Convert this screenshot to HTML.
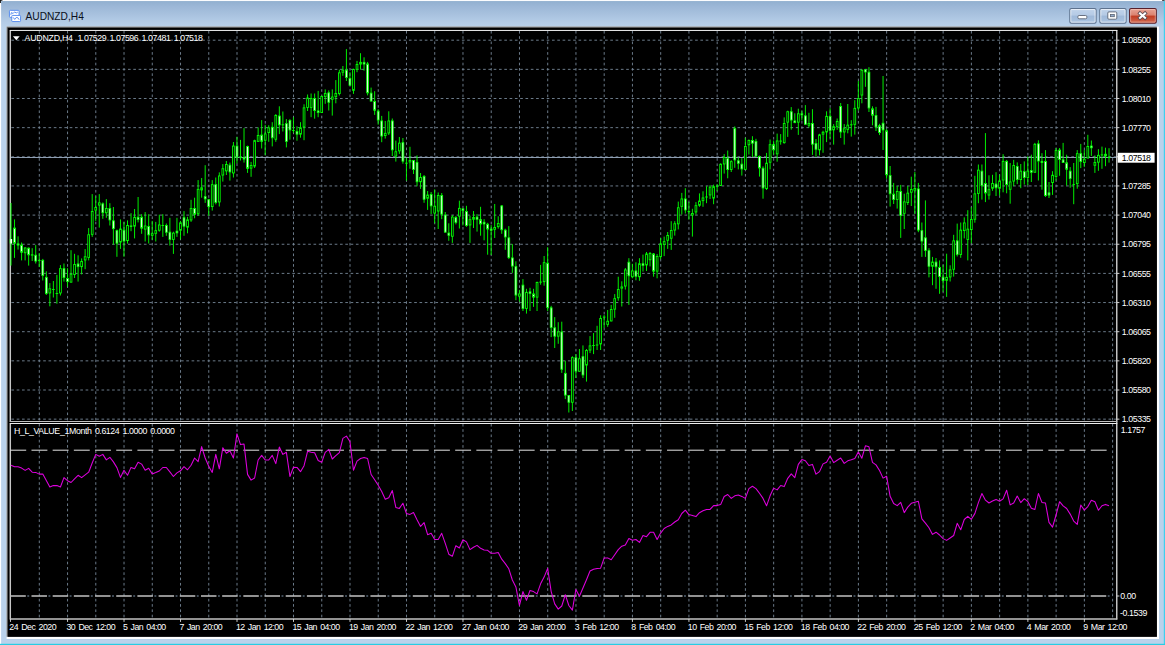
<!DOCTYPE html>
<html><head><meta charset="utf-8"><title>AUDNZD,H4</title>
<style>
html,body{margin:0;padding:0;}
body{width:1165px;height:645px;overflow:hidden;position:relative;background:#bad2eb;font-family:"Liberation Sans",sans-serif;}
.abs{position:absolute;}
#frame,#chart{left:0;top:0;}
.t{position:absolute;color:#fff;font-size:8.8px;line-height:10px;letter-spacing:-0.43px;word-spacing:1.3px;white-space:nowrap;}
.t .L{letter-spacing:-0.25px;}
.tm{letter-spacing:-0.53px !important;}
.pl{left:1121.8px;}
#title{position:absolute;left:25.5px;top:10.1px;font-size:10.2px;line-height:14px;color:#0a1020;white-space:nowrap;}
</style></head><body>

<svg id="frame" class="abs" width="1165" height="645" viewBox="0 0 1165 645">
<defs><linearGradient id="tg" x1="0" y1="0" x2="0" y2="1"><stop offset="0" stop-color="#91afcf"/><stop offset="0.2" stop-color="#9cb7d7"/><stop offset="0.45" stop-color="#a6c0dd"/><stop offset="0.75" stop-color="#b3cbe6"/><stop offset="1" stop-color="#bad2eb"/></linearGradient>
<linearGradient id="bg" x1="0" y1="0" x2="0" y2="1"><stop offset="0" stop-color="#c1d4eb"/><stop offset="0.46" stop-color="#b5cae5"/><stop offset="0.5" stop-color="#9fb9d9"/><stop offset="1" stop-color="#abc4e1"/></linearGradient>
<linearGradient id="rg" x1="0" y1="0" x2="0" y2="1"><stop offset="0" stop-color="#e8a496"/><stop offset="0.46" stop-color="#db826f"/><stop offset="0.5" stop-color="#c03a20"/><stop offset="1" stop-color="#d26c53"/></linearGradient></defs>
<rect x="0" y="0" width="1165" height="645" fill="#bad2eb"/>
<rect x="0" y="1" width="1165" height="27" fill="url(#tg)"/>
<rect x="0" y="0" width="1165" height="1.05" fill="#fbfcfe"/>
<rect x="0" y="0" width="1.1" height="645" fill="#fdfeff"/>
<rect x="1163.8" y="0" width="1.2" height="645" fill="#3ecfee"/>
<rect x="0" y="643.8" width="1165" height="1.2" fill="#27cde3"/>
<path d="M0 0h2.4v0.8h-1.5v2.2h-0.9z" fill="#111"/>
<path d="M1164.4 0h-2.3v0.75h2.3z" fill="#111"/><path d="M1164.3 0h0.7v1.3h-0.7z" fill="#888"/>
<rect x="6.6" y="26.6" width="1152.4" height="612.4" fill="#fff"/>
<rect x="6.6" y="26.6" width="1150.3" height="610.2" fill="#6e6e6e"/>
<rect x="7.8" y="27.8" width="1149.1" height="609" fill="#000"/>
<rect x="1069.8" y="8.55" width="26.3" height="14.6" rx="1.5" fill="url(#bg)" stroke="#5d728e" stroke-width="1.05"/>
<rect x="1070.8" y="9.55" width="24.3" height="12.6" rx="0.9" fill="none" stroke="rgba(255,255,255,0.7)" stroke-width="0.9"/>
<rect x="1099.8" y="8.55" width="26.3" height="14.6" rx="1.5" fill="url(#bg)" stroke="#5d728e" stroke-width="1.05"/>
<rect x="1100.8" y="9.55" width="24.3" height="12.6" rx="0.9" fill="none" stroke="rgba(255,255,255,0.7)" stroke-width="0.9"/>
<rect x="1129.6" y="8.55" width="26.7" height="14.6" rx="1.5" fill="url(#rg)" stroke="#561f2b" stroke-width="1.05"/>
<rect x="1130.6" y="9.55" width="24.7" height="12.6" rx="0.9" fill="none" stroke="rgba(255,215,205,0.55)" stroke-width="0.9"/>
<rect x="1077.9" y="15.5" width="8.9" height="3.3" rx="1.2" fill="#fff" stroke="#5c6474" stroke-width="0.9"/>
<rect x="1107.8" y="11.9" width="9" height="7.3" rx="1.1" fill="#fff" stroke="#5c6474" stroke-width="0.9"/>
<rect x="1110.4" y="14.4" width="3.9" height="2.3" fill="#96aece" stroke="#5c6474" stroke-width="0.8"/>
<path d="M1140 13.4l5 4.4M1145 13.4l-5 4.4" stroke="#5c4a50" stroke-width="3.7" stroke-linecap="square" fill="none"/>
<path d="M1140 13.4l5 4.4M1145 13.4l-5 4.4" stroke="#fff" stroke-width="2.1" stroke-linecap="square" fill="none"/>
<rect x="9.45" y="10.35" width="9.6" height="7" rx="0.8" fill="#fff" stroke="#4c84ee" stroke-width="0.9"/>
<path d="M10.8 14.8l0.6-2.2 1.7 0.9 1.5-1.6 1.6 1.1 1.6-0.9" stroke="#4c84ee" stroke-width="0.9" fill="none"/>
<rect x="11.75" y="15.45" width="8.8" height="6.1" rx="0.8" fill="#fff" stroke="#4c84ee" stroke-width="0.9"/>
<path d="M13.2 17.4l1.5 2 1.5-1.9 1.6 0.2 1.3 2" stroke="#4c84ee" stroke-width="0.9" fill="none"/>
</svg>
<svg id="chart" class="abs" width="1165" height="645" viewBox="0 0 1165 645">
<path d="M39.3 30.9V421M67.55 30.9V421M95.79 30.9V421M124.03 30.9V421M152.28 30.9V421M180.52 30.9V421M208.77 30.9V421M237.01 30.9V421M265.26 30.9V421M293.5 30.9V421M321.75 30.9V421M350 30.9V421M378.24 30.9V421M406.49 30.9V421M434.73 30.9V421M462.98 30.9V421M491.22 30.9V421M519.47 30.9V421M547.71 30.9V421M575.95 30.9V421M604.2 30.9V421M632.44 30.9V421M660.69 30.9V421M688.93 30.9V421M717.18 30.9V421M745.42 30.9V421M773.67 30.9V421M801.91 30.9V421M830.16 30.9V421M858.4 30.9V421M886.65 30.9V421M914.89 30.9V421M943.14 30.9V421M971.38 30.9V421M999.63 30.9V421M1027.88 30.9V421M1056.12 30.9V421M1084.37 30.9V421M1112.61 30.9V421" stroke="#778899" stroke-width="0.9" stroke-dasharray="2.65 2.65" fill="none"/>
<path d="M39.3 423.9V618.5M67.55 423.9V618.5M95.79 423.9V618.5M124.03 423.9V618.5M152.28 423.9V618.5M180.52 423.9V618.5M208.77 423.9V618.5M237.01 423.9V618.5M265.26 423.9V618.5M293.5 423.9V618.5M321.75 423.9V618.5M350 423.9V618.5M378.24 423.9V618.5M406.49 423.9V618.5M434.73 423.9V618.5M462.98 423.9V618.5M491.22 423.9V618.5M519.47 423.9V618.5M547.71 423.9V618.5M575.95 423.9V618.5M604.2 423.9V618.5M632.44 423.9V618.5M660.69 423.9V618.5M688.93 423.9V618.5M717.18 423.9V618.5M745.42 423.9V618.5M773.67 423.9V618.5M801.91 423.9V618.5M830.16 423.9V618.5M858.4 423.9V618.5M886.65 423.9V618.5M914.89 423.9V618.5M943.14 423.9V618.5M971.38 423.9V618.5M999.63 423.9V618.5M1027.88 423.9V618.5M1056.12 423.9V618.5M1084.37 423.9V618.5M1112.61 423.9V618.5" stroke="#778899" stroke-width="0.9" stroke-dasharray="2.65 2.65" fill="none"/>
<path d="M11.4 40.2H1116.7M11.4 69.35H1116.7M11.4 98.5H1116.7M11.4 127.65H1116.7M11.4 156.8H1116.7M11.4 185.95H1116.7M11.4 215.1H1116.7M11.4 244.25H1116.7M11.4 273.4H1116.7M11.4 302.55H1116.7M11.4 331.7H1116.7M11.4 360.85H1116.7M11.4 390H1116.7M11.4 419.15H1116.7" stroke="#778899" stroke-width="0.9" stroke-dasharray="2.65 2.65" fill="none"/>
<path d="M10.45 157.5H1116.7" stroke="#95a5ba" stroke-width="0.95" fill="none"/>
<path d="M10.3 30V421.9M10.3 423V619.5" stroke="#c6c6c6" stroke-width="1.45" fill="none"/>
<path d="M1116.75 30V619.5" stroke="#c2c2c2" stroke-width="1.5" fill="none"/>
<path d="M9.95 30.45H1117.3" stroke="#f0f0f0" stroke-width="1" fill="none"/>
<path d="M9.95 421.45H1117.3" stroke="#c0c0c0" stroke-width="1.05" fill="none"/>
<path d="M9.95 423.4H1117.3" stroke="#ececec" stroke-width="1.05" fill="none"/>
<path d="M9.95 618.9H1117.3" stroke="#c2c2c2" stroke-width="1.5" fill="none"/>
<g id="candles">
<path d="M11 203V265.5M14.53 219.4V257.9M18.06 236.3V249.6M21.59 242.5V260.4M25.12 247.2V260.4M28.65 247.5V265.6M32.18 248.2V261M35.71 245.1V263.5M39.24 253.2V267.1M37.92 260.5H40.57M42.78 258.9V280.5M46.31 271.3V295M49.84 283.1V306.3M53.37 281V297.5M52.04 289.5H54.69M56.9 274.9V303.7M55.57 293.5H58.22M60.43 265.1V295.5M63.96 263.5V281.6M67.49 268.2V286.7M71.02 250.2V282.6M74.55 253.8V278M78.08 255.3V281.6M81.61 258.4V274.4M85.14 249.1V269.2M88.67 228.1V260.4M92.2 194.1V236.9M95.73 196.2V220.9M99.27 194.1V227.6M102.8 202.4V218.8M106.33 199.1V217.8M109.86 203.2V225.5M113.39 207V244.6M116.92 229.5V256.8M120.45 219.4V248.9M123.98 221.9V256.8M127.51 220.4V243.6M131.04 213.2V231.2M134.57 209V238.4M138.1 197V222.4M141.63 214.2V233.8M145.16 212.1V241.5M148.69 214.2V243.5M152.22 220.9V239.9M155.75 221.9V241.5M159.29 214.7V231.7M162.82 214.2V236.9M161.49 225.5H164.14M166.35 223.5V235.8M169.88 217.8V245.6M173.41 231.7V253.9M176.94 217.8V236.9M180.47 220.9V239.4M184 211.1V235.8M187.53 216.8V233.3M191.06 199.8V221.9M194.59 197.7V218.3M198.12 180.1V215.7M201.65 178V197.7M205.18 165.2V202.9M208.71 198.8V215.7M212.24 180.1V210.6M215.77 177.5V204.4M219.31 172.4V206.5M222.84 164.1V181.6M226.37 161V175M229.9 162.6V180.6M233.43 142V177.5M236.96 136.8V163.6M240.49 139.9V160.5M239.16 157.5H241.81M244.02 128.1V162.6M247.55 145.6V172.9M251.08 161.9V176.8M254.61 139.7V168M258.14 127.4V141.8M261.67 120.1V148.5M265.2 124.8V155.2M268.73 125.3V141.8M272.26 122.2V146.4M275.8 114.1V141.8M279.33 106.3V134.1M282.86 111.5V131.5M281.53 124.8H284.18M286.39 119.1V147.4M289.92 119.1V139.7M293.45 117.2V133M292.12 130.5H294.77M296.98 126.3V140.7M300.51 122.2V137.7M304.04 104.3V140.2M307.57 94.5V111M311.1 93.5V117.2M314.63 93.5V118.7M318.16 90.9V117.2M321.69 95.5V113M325.22 89.4V103.8M328.75 90.4V110.5M332.28 89.4V115.6M335.82 80.1V103.3M339.35 69.7V95.5M342.88 66V75.8M346.41 49.1V81M349.94 72.2V86.1M353.47 68.6V93.9M357 60.9V72.2M360.53 53.2V69.7M364.06 57.3V70.7M367.59 61.9V95.4M371.12 87.6V101.5M374.65 91.2V114.9M378.18 109.2V124.7M381.71 115.9V142.2M385.24 121V138.6M388.77 111.3V135M392.3 118.5V156M395.84 140.6V161.6M399.37 137V153.9M402.9 138V163.7M406.43 158V180.7M405.1 163.2H407.75M409.96 146.8V168.8M413.49 160.1V174M417.02 155.4V186.3M420.55 173V188.9M424.08 175V202.8M427.61 191V209.9M431.14 192V214M434.67 189.4V223.3M438.2 192.5V229M441.73 193V219.2M445.26 212V232.6M448.79 223.3V240.8M452.33 215.1V242.9M455.86 216.1V224.4M459.39 200.7V228.5M462.92 208.4V225.4M466.45 205.8V226.9M469.98 215.6V242.9M473.51 211V228M477.04 214.1V231.6M480.57 206.8V235.7M484.1 219.2V240.3M487.63 222.8V254.7M491.16 225.1V255M494.69 204V238M498.22 216.3V228.7M501.75 205V233.8M505.28 228.7V249.8M508.81 226.1V259.1M512.35 244.1V272.9M515.88 261.3V300.2M519.41 289.9V301.7M522.94 279.1V311M526.47 288.8V313.6M530 287.8V311M533.53 288.8V306.9M537.06 281.6V311M540.59 264.9V284.7M539.27 282.1H541.91M544.12 256V285.7M547.65 247.2V311M551.18 305.8V337.1M554.71 317.1V348M558.24 322.2V343.8M561.77 321.7V372.9M565.3 360.8V399.1M568.83 395V412.5M572.37 356.2V411M575.9 354.1V378M579.43 349V371.7M582.96 345.4V378M586.49 349V381.6M590.02 336.1V353.1M593.55 333V354.1M592.22 345.5H594.87M597.08 325.8V350M595.76 345H598.4M600.61 315.3V350M604.14 315.1V327.9M602.82 317.1H605.46M607.67 310V326.8M611.2 304.9V321.4M614.73 294.1V317.8M618.26 276.7V300.8M621.79 281.3V306.5M625.32 268V289.6M628.86 258.2V304.9M632.39 263.8V278.3M635.92 262.3V280.3M639.45 258.2V280.8M642.98 254.6V271.6M646.51 252V271M650.04 252V266.4M653.57 253V276.7M657.1 254.1V278.3M660.63 238V259.2M664.16 236.6V256.1M667.69 232V248.9M671.22 221.2V249.9M674.75 221.2V235.6M678.28 201.6V229.4M681.81 192.9V214.5M685.34 188.2V213.5M688.88 202.1V219.7M687.55 211.5H690.2M692.41 208.8V236.6M695.94 202.1V214.5M699.47 193.4V206.8M703 191.3V206.8M706.53 186.2V203.2M705.2 197H707.85M710.06 185.1V199M713.59 184.6V204.2M717.12 184.1V190.8M715.8 186.2H718.44M720.65 163.3V186M724.18 154.1V173.6M727.71 150.5V178.3M731.24 160.2V172M734.77 126.4V167.8M738.3 157.3V169.4M741.83 158.1V175.6M745.36 137.7V169.9M748.9 139.5V154.5M752.43 136.2V157M755.96 138.8V156.5M759.49 155.5V176.6M763.02 166.3V198.7M766.55 152.9V190M770.08 139.5V169.4M773.61 140.5V154.5M777.14 133.6V161.7M780.67 134.1V144.7M779.35 141.1H781.99M784.2 117.4V143.7M787.73 110.7V136.9M791.26 107.1V129.7M794.79 113.3V123.1M798.32 108.7V134.9M801.85 110.7V120.5M805.38 105.1V124.7M808.92 112.8V127.7M812.45 109.2V154.9M815.98 139V156.9M819.51 133.8V155.4M823.04 130.7V152.8M826.57 111.3V142.1M830.1 108.2V138.5M833.63 124.1V144.6M837.16 118.5V129.8M840.69 103V138M844.22 124.1V144.6M847.75 104V133.3M851.28 120.2V136.6M849.96 124.8H852.61M854.81 100.2V134.6M858.34 81.1V110.5M861.87 69.3V103.3M865.41 69.1V86.8M868.94 67.2V112M872.47 106.3V125.3M876 106.9V131M879.53 123.8V135.1M883.06 76V150M886.59 128.9V178.8M890.12 166V206.6M893.65 182.9V204M897.18 186V208.6M900.71 184.9V237.9M904.24 193.7V229M907.77 186V205M911.3 176.7V206M914.83 172.1V213.8M918.36 182.9V232.2M921.89 222.5V256.9M925.43 200.4V256.9M928.96 248.2V277.4M932.49 256.9V285.2M936.02 258V288.8M939.55 260.4V293.8M943.08 264.8V291.7M946.61 253.7V296.9M950.14 265.3V281.5M953.67 234.8V276.6M957.2 223.6V256.5M960.73 222.5V257.8M964.26 217.4V238.4M967.79 210.2V260.4M971.32 207.3V243.3M974.85 175.8V222.7M978.38 164.5V203.2M981.92 164.5V199.6M985.45 133.1V202.1M988.98 175.3V199.6M992.51 174.8V190.8M996.04 172.2V196M999.57 174.8V195.5M1003.1 154.2V192.3M1006.63 159.9V193.3M1010.16 163V203.7M1013.69 159.9V186.1M1017.22 162.4V184.1M1020.75 164V188.2M1024.28 161.4V184.6M1027.81 156.3V185.1M1031.34 154.7V182M1034.87 142.9V172.7M1038.4 140.3V180.5M1041.94 153.2V189.7M1045.47 150.1V197M1049 182V198M1052.53 171.2V194.9M1056.06 148V180.5M1059.59 148V175.8M1063.12 142.9V163M1066.65 154.7V185.6M1070.18 167.1V187.7M1073.71 163V204.2M1072.39 184.6H1075.03M1077.24 150.1V188.7M1080.77 143.9V168.1M1084.3 150.1V167.1M1087.83 134.8V158.4M1091.36 140.5V155.9M1094.89 155.4V172.9M1098.42 149.2V170.8M1101.96 146.6V168.8M1100.63 154.9H1103.28M1105.49 147.7V166.2M1109.02 148.2V162.6M1107.69 157.4H1110.34" stroke="#00ff00" stroke-width="0.93" fill="none"/>
<rect x="10.12" y="239.44" width="1.77" height="3.62" fill="#fff" stroke="#00ff00" stroke-width="0.88"/>
<rect x="13.65" y="228.04" width="1.77" height="15.12" fill="#fff" stroke="#00ff00" stroke-width="0.88"/>
<rect x="17.18" y="243.94" width="1.77" height="1.12" fill="#fff" stroke="#00ff00" stroke-width="0.88"/>
<rect x="20.71" y="245.04" width="1.77" height="7.22" fill="#fff" stroke="#00ff00" stroke-width="0.88"/>
<rect x="24.24" y="247.94" width="1.77" height="4.82" fill="#000" stroke="#00ff00" stroke-width="0.88"/>
<rect x="27.77" y="248.14" width="1.77" height="6.72" fill="#fff" stroke="#00ff00" stroke-width="0.88"/>
<rect x="31.3" y="254.74" width="1.77" height="0.42" fill="#000" stroke="#00ff00" stroke-width="0.88"/>
<rect x="34.83" y="255.24" width="1.77" height="5.82" fill="#fff" stroke="#00ff00" stroke-width="0.88"/>
<rect x="41.89" y="260.34" width="1.77" height="15.12" fill="#fff" stroke="#00ff00" stroke-width="0.88"/>
<rect x="45.42" y="277.34" width="1.77" height="16.12" fill="#fff" stroke="#00ff00" stroke-width="0.88"/>
<rect x="48.95" y="288.74" width="1.77" height="4.22" fill="#000" stroke="#00ff00" stroke-width="0.88"/>
<rect x="59.55" y="268.64" width="1.77" height="24.32" fill="#000" stroke="#00ff00" stroke-width="0.88"/>
<rect x="63.08" y="268.64" width="1.77" height="8.92" fill="#fff" stroke="#00ff00" stroke-width="0.88"/>
<rect x="66.61" y="278.44" width="1.77" height="3.12" fill="#fff" stroke="#00ff00" stroke-width="0.88"/>
<rect x="70.14" y="274.24" width="1.77" height="7.92" fill="#000" stroke="#00ff00" stroke-width="0.88"/>
<rect x="73.67" y="264.44" width="1.77" height="10.02" fill="#000" stroke="#00ff00" stroke-width="0.88"/>
<rect x="77.2" y="263.94" width="1.77" height="2.72" fill="#fff" stroke="#00ff00" stroke-width="0.88"/>
<rect x="80.73" y="261.44" width="1.77" height="5.22" fill="#000" stroke="#00ff00" stroke-width="0.88"/>
<rect x="84.26" y="256.74" width="1.77" height="3.22" fill="#000" stroke="#00ff00" stroke-width="0.88"/>
<rect x="87.79" y="234.74" width="1.77" height="22.72" fill="#000" stroke="#00ff00" stroke-width="0.88"/>
<rect x="91.32" y="211.54" width="1.77" height="22.82" fill="#000" stroke="#00ff00" stroke-width="0.88"/>
<rect x="94.85" y="207.44" width="1.77" height="2.72" fill="#000" stroke="#00ff00" stroke-width="0.88"/>
<rect x="98.38" y="202.84" width="1.77" height="2.22" fill="#000" stroke="#00ff00" stroke-width="0.88"/>
<rect x="101.91" y="203.84" width="1.77" height="8.92" fill="#fff" stroke="#00ff00" stroke-width="0.88"/>
<rect x="105.44" y="208.44" width="1.77" height="4.32" fill="#000" stroke="#00ff00" stroke-width="0.88"/>
<rect x="108.97" y="208.44" width="1.77" height="11.52" fill="#fff" stroke="#00ff00" stroke-width="0.88"/>
<rect x="112.5" y="220.84" width="1.77" height="7.82" fill="#fff" stroke="#00ff00" stroke-width="0.88"/>
<rect x="116.04" y="230.64" width="1.77" height="12.52" fill="#fff" stroke="#00ff00" stroke-width="0.88"/>
<rect x="119.57" y="229.04" width="1.77" height="13.02" fill="#000" stroke="#00ff00" stroke-width="0.88"/>
<rect x="123.1" y="230.14" width="1.77" height="10.92" fill="#fff" stroke="#00ff00" stroke-width="0.88"/>
<rect x="126.63" y="225.44" width="1.77" height="15.12" fill="#000" stroke="#00ff00" stroke-width="0.88"/>
<rect x="130.16" y="225.94" width="1.77" height="0.42" fill="#fff" stroke="#00ff00" stroke-width="0.88"/>
<rect x="133.69" y="217.24" width="1.77" height="8.92" fill="#000" stroke="#00ff00" stroke-width="0.88"/>
<rect x="137.22" y="217.24" width="1.77" height="2.22" fill="#fff" stroke="#00ff00" stroke-width="0.88"/>
<rect x="140.75" y="217.24" width="1.77" height="10.92" fill="#fff" stroke="#00ff00" stroke-width="0.88"/>
<rect x="144.28" y="225.94" width="1.77" height="3.22" fill="#000" stroke="#00ff00" stroke-width="0.88"/>
<rect x="147.81" y="226.44" width="1.77" height="8.42" fill="#fff" stroke="#00ff00" stroke-width="0.88"/>
<rect x="151.34" y="233.64" width="1.77" height="1.72" fill="#000" stroke="#00ff00" stroke-width="0.88"/>
<rect x="154.87" y="230.64" width="1.77" height="2.72" fill="#000" stroke="#00ff00" stroke-width="0.88"/>
<rect x="158.4" y="224.94" width="1.77" height="5.32" fill="#000" stroke="#00ff00" stroke-width="0.88"/>
<rect x="165.46" y="225.44" width="1.77" height="6.82" fill="#fff" stroke="#00ff00" stroke-width="0.88"/>
<rect x="168.99" y="232.14" width="1.77" height="7.32" fill="#fff" stroke="#00ff00" stroke-width="0.88"/>
<rect x="172.52" y="233.14" width="1.77" height="6.32" fill="#000" stroke="#00ff00" stroke-width="0.88"/>
<rect x="176.06" y="231.14" width="1.77" height="1.72" fill="#fff" stroke="#00ff00" stroke-width="0.88"/>
<rect x="179.59" y="222.84" width="1.77" height="7.42" fill="#000" stroke="#00ff00" stroke-width="0.88"/>
<rect x="183.12" y="217.74" width="1.77" height="8.42" fill="#fff" stroke="#00ff00" stroke-width="0.88"/>
<rect x="186.65" y="219.84" width="1.77" height="7.32" fill="#000" stroke="#00ff00" stroke-width="0.88"/>
<rect x="190.18" y="208.44" width="1.77" height="11.52" fill="#000" stroke="#00ff00" stroke-width="0.88"/>
<rect x="193.71" y="208.44" width="1.77" height="5.82" fill="#fff" stroke="#00ff00" stroke-width="0.88"/>
<rect x="197.24" y="189.34" width="1.77" height="24.42" fill="#000" stroke="#00ff00" stroke-width="0.88"/>
<rect x="200.77" y="187.74" width="1.77" height="2.22" fill="#000" stroke="#00ff00" stroke-width="0.88"/>
<rect x="204.3" y="196.64" width="1.77" height="2.22" fill="#fff" stroke="#00ff00" stroke-width="0.88"/>
<rect x="207.83" y="199.74" width="1.77" height="6.82" fill="#fff" stroke="#00ff00" stroke-width="0.88"/>
<rect x="211.36" y="184.64" width="1.77" height="21.92" fill="#000" stroke="#00ff00" stroke-width="0.88"/>
<rect x="214.89" y="184.64" width="1.77" height="17.82" fill="#fff" stroke="#00ff00" stroke-width="0.88"/>
<rect x="218.42" y="175.94" width="1.77" height="26.02" fill="#000" stroke="#00ff00" stroke-width="0.88"/>
<rect x="221.95" y="168.74" width="1.77" height="6.32" fill="#000" stroke="#00ff00" stroke-width="0.88"/>
<rect x="225.48" y="164.54" width="1.77" height="6.32" fill="#000" stroke="#00ff00" stroke-width="0.88"/>
<rect x="229.01" y="165.14" width="1.77" height="6.82" fill="#fff" stroke="#00ff00" stroke-width="0.88"/>
<rect x="232.55" y="146.04" width="1.77" height="26.92" fill="#000" stroke="#00ff00" stroke-width="0.88"/>
<rect x="236.08" y="146.04" width="1.77" height="10.92" fill="#fff" stroke="#00ff00" stroke-width="0.88"/>
<rect x="243.14" y="157.84" width="1.77" height="1.22" fill="#fff" stroke="#00ff00" stroke-width="0.88"/>
<rect x="246.67" y="146.54" width="1.77" height="21.82" fill="#fff" stroke="#00ff00" stroke-width="0.88"/>
<rect x="250.2" y="165.44" width="1.77" height="2.72" fill="#000" stroke="#00ff00" stroke-width="0.88"/>
<rect x="253.73" y="140.64" width="1.77" height="25.42" fill="#000" stroke="#00ff00" stroke-width="0.88"/>
<rect x="257.26" y="135.54" width="1.77" height="5.82" fill="#000" stroke="#00ff00" stroke-width="0.88"/>
<rect x="260.79" y="135.04" width="1.77" height="6.32" fill="#fff" stroke="#00ff00" stroke-width="0.88"/>
<rect x="264.32" y="133.94" width="1.77" height="6.32" fill="#000" stroke="#00ff00" stroke-width="0.88"/>
<rect x="267.85" y="127.84" width="1.77" height="4.72" fill="#000" stroke="#00ff00" stroke-width="0.88"/>
<rect x="271.38" y="127.24" width="1.77" height="10.52" fill="#fff" stroke="#00ff00" stroke-width="0.88"/>
<rect x="274.91" y="115.54" width="1.77" height="23.72" fill="#000" stroke="#00ff00" stroke-width="0.88"/>
<rect x="278.44" y="116.04" width="1.77" height="8.82" fill="#fff" stroke="#00ff00" stroke-width="0.88"/>
<rect x="285.5" y="123.64" width="1.77" height="17.72" fill="#fff" stroke="#00ff00" stroke-width="0.88"/>
<rect x="289.03" y="120.54" width="1.77" height="9.42" fill="#fff" stroke="#00ff00" stroke-width="0.88"/>
<rect x="296.1" y="131.44" width="1.77" height="2.72" fill="#fff" stroke="#00ff00" stroke-width="0.88"/>
<rect x="299.63" y="127.84" width="1.77" height="6.32" fill="#000" stroke="#00ff00" stroke-width="0.88"/>
<rect x="303.16" y="107.84" width="1.77" height="19.12" fill="#000" stroke="#00ff00" stroke-width="0.88"/>
<rect x="306.69" y="98.04" width="1.77" height="9.42" fill="#000" stroke="#00ff00" stroke-width="0.88"/>
<rect x="310.22" y="98.54" width="1.77" height="8.92" fill="#000" stroke="#00ff00" stroke-width="0.88"/>
<rect x="313.75" y="98.54" width="1.77" height="12.02" fill="#fff" stroke="#00ff00" stroke-width="0.88"/>
<rect x="317.28" y="110.94" width="1.77" height="1.62" fill="#fff" stroke="#00ff00" stroke-width="0.88"/>
<rect x="320.81" y="96.44" width="1.77" height="16.12" fill="#000" stroke="#00ff00" stroke-width="0.88"/>
<rect x="324.34" y="93.44" width="1.77" height="3.22" fill="#000" stroke="#00ff00" stroke-width="0.88"/>
<rect x="327.87" y="92.84" width="1.77" height="9.42" fill="#fff" stroke="#00ff00" stroke-width="0.88"/>
<rect x="331.4" y="97.04" width="1.77" height="2.22" fill="#000" stroke="#00ff00" stroke-width="0.88"/>
<rect x="334.93" y="93.44" width="1.77" height="3.22" fill="#000" stroke="#00ff00" stroke-width="0.88"/>
<rect x="338.46" y="72.84" width="1.77" height="20.72" fill="#000" stroke="#00ff00" stroke-width="0.88"/>
<rect x="341.99" y="70.14" width="1.77" height="2.12" fill="#000" stroke="#00ff00" stroke-width="0.88"/>
<rect x="345.52" y="70.14" width="1.77" height="7.32" fill="#fff" stroke="#00ff00" stroke-width="0.88"/>
<rect x="349.05" y="78.34" width="1.77" height="6.82" fill="#fff" stroke="#00ff00" stroke-width="0.88"/>
<rect x="352.59" y="69.54" width="1.77" height="20.82" fill="#000" stroke="#00ff00" stroke-width="0.88"/>
<rect x="356.12" y="64.44" width="1.77" height="4.82" fill="#000" stroke="#00ff00" stroke-width="0.88"/>
<rect x="359.65" y="62.34" width="1.77" height="1.72" fill="#000" stroke="#00ff00" stroke-width="0.88"/>
<rect x="363.18" y="62.34" width="1.77" height="1.72" fill="#fff" stroke="#00ff00" stroke-width="0.88"/>
<rect x="366.71" y="63.94" width="1.77" height="28.92" fill="#fff" stroke="#00ff00" stroke-width="0.88"/>
<rect x="370.24" y="93.14" width="1.77" height="7.92" fill="#fff" stroke="#00ff00" stroke-width="0.88"/>
<rect x="373.77" y="101.44" width="1.77" height="8.82" fill="#fff" stroke="#00ff00" stroke-width="0.88"/>
<rect x="377.3" y="111.14" width="1.77" height="8.92" fill="#fff" stroke="#00ff00" stroke-width="0.88"/>
<rect x="380.83" y="120.94" width="1.77" height="15.12" fill="#fff" stroke="#00ff00" stroke-width="0.88"/>
<rect x="384.36" y="133.34" width="1.77" height="2.22" fill="#000" stroke="#00ff00" stroke-width="0.88"/>
<rect x="387.89" y="120.94" width="1.77" height="12.02" fill="#000" stroke="#00ff00" stroke-width="0.88"/>
<rect x="391.42" y="120.94" width="1.77" height="28.92" fill="#fff" stroke="#00ff00" stroke-width="0.88"/>
<rect x="394.95" y="151.74" width="1.77" height="4.32" fill="#000" stroke="#00ff00" stroke-width="0.88"/>
<rect x="398.48" y="143.14" width="1.77" height="7.72" fill="#000" stroke="#00ff00" stroke-width="0.88"/>
<rect x="402.01" y="142.64" width="1.77" height="18.52" fill="#fff" stroke="#00ff00" stroke-width="0.88"/>
<rect x="409.08" y="160.54" width="1.77" height="1.42" fill="#000" stroke="#00ff00" stroke-width="0.88"/>
<rect x="412.61" y="160.54" width="1.77" height="8.92" fill="#fff" stroke="#00ff00" stroke-width="0.88"/>
<rect x="416.14" y="162.54" width="1.77" height="19.22" fill="#fff" stroke="#00ff00" stroke-width="0.88"/>
<rect x="419.67" y="177.54" width="1.77" height="4.22" fill="#000" stroke="#00ff00" stroke-width="0.88"/>
<rect x="423.2" y="176.44" width="1.77" height="22.82" fill="#fff" stroke="#00ff00" stroke-width="0.88"/>
<rect x="426.73" y="195.04" width="1.77" height="3.22" fill="#000" stroke="#00ff00" stroke-width="0.88"/>
<rect x="430.26" y="194.54" width="1.77" height="11.32" fill="#fff" stroke="#00ff00" stroke-width="0.88"/>
<rect x="433.79" y="206.24" width="1.77" height="6.82" fill="#000" stroke="#00ff00" stroke-width="0.88"/>
<rect x="437.32" y="195.54" width="1.77" height="15.52" fill="#000" stroke="#00ff00" stroke-width="0.88"/>
<rect x="440.85" y="195.54" width="1.77" height="18.62" fill="#fff" stroke="#00ff00" stroke-width="0.88"/>
<rect x="444.38" y="215.04" width="1.77" height="17.12" fill="#fff" stroke="#00ff00" stroke-width="0.88"/>
<rect x="447.91" y="233.04" width="1.77" height="2.22" fill="#fff" stroke="#00ff00" stroke-width="0.88"/>
<rect x="451.44" y="217.04" width="1.77" height="19.22" fill="#000" stroke="#00ff00" stroke-width="0.88"/>
<rect x="454.97" y="217.54" width="1.77" height="4.82" fill="#fff" stroke="#00ff00" stroke-width="0.88"/>
<rect x="458.5" y="208.34" width="1.77" height="7.82" fill="#000" stroke="#00ff00" stroke-width="0.88"/>
<rect x="462.03" y="208.84" width="1.77" height="1.72" fill="#fff" stroke="#00ff00" stroke-width="0.88"/>
<rect x="465.56" y="211.44" width="1.77" height="14.02" fill="#fff" stroke="#00ff00" stroke-width="0.88"/>
<rect x="469.1" y="219.64" width="1.77" height="5.32" fill="#000" stroke="#00ff00" stroke-width="0.88"/>
<rect x="472.63" y="217.54" width="1.77" height="1.72" fill="#000" stroke="#00ff00" stroke-width="0.88"/>
<rect x="476.16" y="217.04" width="1.77" height="2.22" fill="#fff" stroke="#00ff00" stroke-width="0.88"/>
<rect x="479.69" y="219.64" width="1.77" height="4.32" fill="#fff" stroke="#00ff00" stroke-width="0.88"/>
<rect x="483.22" y="222.24" width="1.77" height="1.72" fill="#fff" stroke="#00ff00" stroke-width="0.88"/>
<rect x="486.75" y="224.24" width="1.77" height="4.82" fill="#fff" stroke="#00ff00" stroke-width="0.88"/>
<rect x="490.28" y="229.14" width="1.77" height="1.12" fill="#fff" stroke="#00ff00" stroke-width="0.88"/>
<rect x="493.81" y="227.54" width="1.77" height="1.72" fill="#000" stroke="#00ff00" stroke-width="0.88"/>
<rect x="497.34" y="223.44" width="1.77" height="3.22" fill="#000" stroke="#00ff00" stroke-width="0.88"/>
<rect x="500.87" y="205.94" width="1.77" height="23.82" fill="#fff" stroke="#00ff00" stroke-width="0.88"/>
<rect x="504.4" y="230.14" width="1.77" height="6.82" fill="#fff" stroke="#00ff00" stroke-width="0.88"/>
<rect x="507.93" y="237.84" width="1.77" height="19.72" fill="#fff" stroke="#00ff00" stroke-width="0.88"/>
<rect x="511.46" y="257.94" width="1.77" height="8.12" fill="#fff" stroke="#00ff00" stroke-width="0.88"/>
<rect x="514.99" y="266.64" width="1.77" height="28.42" fill="#fff" stroke="#00ff00" stroke-width="0.88"/>
<rect x="518.52" y="293.94" width="1.77" height="2.22" fill="#000" stroke="#00ff00" stroke-width="0.88"/>
<rect x="522.05" y="285.14" width="1.77" height="23.32" fill="#fff" stroke="#00ff00" stroke-width="0.88"/>
<rect x="525.58" y="292.34" width="1.77" height="16.12" fill="#000" stroke="#00ff00" stroke-width="0.88"/>
<rect x="529.12" y="291.84" width="1.77" height="1.72" fill="#fff" stroke="#00ff00" stroke-width="0.88"/>
<rect x="532.65" y="293.94" width="1.77" height="3.22" fill="#fff" stroke="#00ff00" stroke-width="0.88"/>
<rect x="536.18" y="282.54" width="1.77" height="14.62" fill="#000" stroke="#00ff00" stroke-width="0.88"/>
<rect x="543.24" y="262.64" width="1.77" height="19.02" fill="#000" stroke="#00ff00" stroke-width="0.88"/>
<rect x="546.77" y="263.14" width="1.77" height="44.32" fill="#fff" stroke="#00ff00" stroke-width="0.88"/>
<rect x="550.3" y="307.84" width="1.77" height="19.62" fill="#fff" stroke="#00ff00" stroke-width="0.88"/>
<rect x="553.83" y="327.84" width="1.77" height="8.32" fill="#fff" stroke="#00ff00" stroke-width="0.88"/>
<rect x="557.36" y="331.94" width="1.77" height="4.22" fill="#000" stroke="#00ff00" stroke-width="0.88"/>
<rect x="560.89" y="331.94" width="1.77" height="37.32" fill="#fff" stroke="#00ff00" stroke-width="0.88"/>
<rect x="564.42" y="373.34" width="1.77" height="21.72" fill="#fff" stroke="#00ff00" stroke-width="0.88"/>
<rect x="567.95" y="395.44" width="1.77" height="6.82" fill="#fff" stroke="#00ff00" stroke-width="0.88"/>
<rect x="571.48" y="357.64" width="1.77" height="44.62" fill="#000" stroke="#00ff00" stroke-width="0.88"/>
<rect x="575.01" y="357.64" width="1.77" height="13.42" fill="#fff" stroke="#00ff00" stroke-width="0.88"/>
<rect x="578.54" y="358.74" width="1.77" height="12.52" fill="#000" stroke="#00ff00" stroke-width="0.88"/>
<rect x="582.07" y="356.64" width="1.77" height="18.32" fill="#fff" stroke="#00ff00" stroke-width="0.88"/>
<rect x="585.61" y="350.44" width="1.77" height="14.62" fill="#000" stroke="#00ff00" stroke-width="0.88"/>
<rect x="589.14" y="345.84" width="1.77" height="4.22" fill="#000" stroke="#00ff00" stroke-width="0.88"/>
<rect x="599.73" y="318.54" width="1.77" height="25.42" fill="#000" stroke="#00ff00" stroke-width="0.88"/>
<rect x="606.79" y="321.24" width="1.77" height="3.12" fill="#000" stroke="#00ff00" stroke-width="0.88"/>
<rect x="610.32" y="309.54" width="1.77" height="11.42" fill="#000" stroke="#00ff00" stroke-width="0.88"/>
<rect x="613.85" y="298.64" width="1.77" height="10.52" fill="#000" stroke="#00ff00" stroke-width="0.88"/>
<rect x="617.38" y="289.54" width="1.77" height="8.22" fill="#000" stroke="#00ff00" stroke-width="0.88"/>
<rect x="620.91" y="286.94" width="1.77" height="1.22" fill="#000" stroke="#00ff00" stroke-width="0.88"/>
<rect x="624.44" y="269.94" width="1.77" height="16.12" fill="#000" stroke="#00ff00" stroke-width="0.88"/>
<rect x="627.97" y="262.24" width="1.77" height="13.52" fill="#fff" stroke="#00ff00" stroke-width="0.88"/>
<rect x="631.5" y="270.94" width="1.77" height="5.82" fill="#000" stroke="#00ff00" stroke-width="0.88"/>
<rect x="635.03" y="270.94" width="1.77" height="5.32" fill="#fff" stroke="#00ff00" stroke-width="0.88"/>
<rect x="638.56" y="263.74" width="1.77" height="13.02" fill="#000" stroke="#00ff00" stroke-width="0.88"/>
<rect x="642.09" y="263.74" width="1.77" height="1.72" fill="#fff" stroke="#00ff00" stroke-width="0.88"/>
<rect x="645.63" y="253.94" width="1.77" height="11.02" fill="#000" stroke="#00ff00" stroke-width="0.88"/>
<rect x="649.16" y="253.44" width="1.77" height="6.32" fill="#000" stroke="#00ff00" stroke-width="0.88"/>
<rect x="652.69" y="253.94" width="1.77" height="17.22" fill="#fff" stroke="#00ff00" stroke-width="0.88"/>
<rect x="656.22" y="256.54" width="1.77" height="14.62" fill="#000" stroke="#00ff00" stroke-width="0.88"/>
<rect x="659.75" y="243.94" width="1.77" height="12.72" fill="#000" stroke="#00ff00" stroke-width="0.88"/>
<rect x="663.28" y="241.64" width="1.77" height="2.72" fill="#000" stroke="#00ff00" stroke-width="0.88"/>
<rect x="666.81" y="235.54" width="1.77" height="4.72" fill="#000" stroke="#00ff00" stroke-width="0.88"/>
<rect x="670.34" y="230.44" width="1.77" height="7.82" fill="#000" stroke="#00ff00" stroke-width="0.88"/>
<rect x="673.87" y="223.74" width="1.77" height="6.32" fill="#000" stroke="#00ff00" stroke-width="0.88"/>
<rect x="677.4" y="207.74" width="1.77" height="16.12" fill="#000" stroke="#00ff00" stroke-width="0.88"/>
<rect x="680.93" y="198.94" width="1.77" height="7.42" fill="#000" stroke="#00ff00" stroke-width="0.88"/>
<rect x="684.46" y="198.94" width="1.77" height="11.02" fill="#fff" stroke="#00ff00" stroke-width="0.88"/>
<rect x="691.52" y="213.44" width="1.77" height="1.62" fill="#000" stroke="#00ff00" stroke-width="0.88"/>
<rect x="695.05" y="205.64" width="1.77" height="6.32" fill="#000" stroke="#00ff00" stroke-width="0.88"/>
<rect x="698.58" y="201.04" width="1.77" height="4.22" fill="#000" stroke="#00ff00" stroke-width="0.88"/>
<rect x="702.11" y="197.94" width="1.77" height="2.72" fill="#000" stroke="#00ff00" stroke-width="0.88"/>
<rect x="709.18" y="187.14" width="1.77" height="7.82" fill="#000" stroke="#00ff00" stroke-width="0.88"/>
<rect x="712.71" y="186.64" width="1.77" height="11.42" fill="#000" stroke="#00ff00" stroke-width="0.88"/>
<rect x="719.77" y="164.24" width="1.77" height="21.32" fill="#000" stroke="#00ff00" stroke-width="0.88"/>
<rect x="723.3" y="157.54" width="1.77" height="6.42" fill="#000" stroke="#00ff00" stroke-width="0.88"/>
<rect x="726.83" y="158.64" width="1.77" height="10.92" fill="#fff" stroke="#00ff00" stroke-width="0.88"/>
<rect x="730.36" y="161.64" width="1.77" height="7.82" fill="#000" stroke="#00ff00" stroke-width="0.88"/>
<rect x="733.89" y="128.64" width="1.77" height="31.32" fill="#fff" stroke="#00ff00" stroke-width="0.88"/>
<rect x="737.42" y="160.84" width="1.77" height="2.42" fill="#fff" stroke="#00ff00" stroke-width="0.88"/>
<rect x="740.95" y="164.14" width="1.77" height="4.82" fill="#fff" stroke="#00ff00" stroke-width="0.88"/>
<rect x="744.48" y="146.54" width="1.77" height="22.92" fill="#000" stroke="#00ff00" stroke-width="0.88"/>
<rect x="748.01" y="140.44" width="1.77" height="4.32" fill="#000" stroke="#00ff00" stroke-width="0.88"/>
<rect x="751.54" y="140.44" width="1.77" height="2.72" fill="#fff" stroke="#00ff00" stroke-width="0.88"/>
<rect x="755.07" y="141.54" width="1.77" height="14.52" fill="#fff" stroke="#00ff00" stroke-width="0.88"/>
<rect x="758.6" y="156.44" width="1.77" height="11.52" fill="#fff" stroke="#00ff00" stroke-width="0.88"/>
<rect x="762.14" y="168.24" width="1.77" height="19.72" fill="#fff" stroke="#00ff00" stroke-width="0.88"/>
<rect x="765.67" y="163.14" width="1.77" height="25.42" fill="#000" stroke="#00ff00" stroke-width="0.88"/>
<rect x="769.2" y="144.64" width="1.77" height="17.62" fill="#000" stroke="#00ff00" stroke-width="0.88"/>
<rect x="772.73" y="144.64" width="1.77" height="5.22" fill="#fff" stroke="#00ff00" stroke-width="0.88"/>
<rect x="776.26" y="140.94" width="1.77" height="12.92" fill="#000" stroke="#00ff00" stroke-width="0.88"/>
<rect x="783.32" y="123.54" width="1.77" height="19.12" fill="#000" stroke="#00ff00" stroke-width="0.88"/>
<rect x="786.85" y="111.74" width="1.77" height="10.42" fill="#000" stroke="#00ff00" stroke-width="0.88"/>
<rect x="790.38" y="111.74" width="1.77" height="8.32" fill="#fff" stroke="#00ff00" stroke-width="0.88"/>
<rect x="793.91" y="120.94" width="1.77" height="1.72" fill="#fff" stroke="#00ff00" stroke-width="0.88"/>
<rect x="797.44" y="113.74" width="1.77" height="8.42" fill="#000" stroke="#00ff00" stroke-width="0.88"/>
<rect x="800.97" y="113.74" width="1.77" height="1.22" fill="#fff" stroke="#00ff00" stroke-width="0.88"/>
<rect x="804.5" y="115.84" width="1.77" height="8.42" fill="#fff" stroke="#00ff00" stroke-width="0.88"/>
<rect x="808.03" y="123.54" width="1.77" height="1.72" fill="#000" stroke="#00ff00" stroke-width="0.88"/>
<rect x="811.56" y="123.54" width="1.77" height="20.62" fill="#fff" stroke="#00ff00" stroke-width="0.88"/>
<rect x="815.09" y="143.54" width="1.77" height="5.72" fill="#fff" stroke="#00ff00" stroke-width="0.88"/>
<rect x="818.62" y="134.84" width="1.77" height="15.02" fill="#000" stroke="#00ff00" stroke-width="0.88"/>
<rect x="822.16" y="132.24" width="1.77" height="1.92" fill="#000" stroke="#00ff00" stroke-width="0.88"/>
<rect x="825.69" y="116.34" width="1.77" height="15.62" fill="#000" stroke="#00ff00" stroke-width="0.88"/>
<rect x="829.22" y="116.34" width="1.77" height="14.02" fill="#fff" stroke="#00ff00" stroke-width="0.88"/>
<rect x="832.75" y="126.64" width="1.77" height="3.22" fill="#000" stroke="#00ff00" stroke-width="0.88"/>
<rect x="836.28" y="121.44" width="1.77" height="5.32" fill="#000" stroke="#00ff00" stroke-width="0.88"/>
<rect x="839.81" y="106.54" width="1.77" height="25.42" fill="#fff" stroke="#00ff00" stroke-width="0.88"/>
<rect x="843.34" y="128.74" width="1.77" height="3.22" fill="#000" stroke="#00ff00" stroke-width="0.88"/>
<rect x="846.87" y="125.14" width="1.77" height="4.22" fill="#000" stroke="#00ff00" stroke-width="0.88"/>
<rect x="853.93" y="108.34" width="1.77" height="16.02" fill="#000" stroke="#00ff00" stroke-width="0.88"/>
<rect x="857.46" y="98.54" width="1.77" height="9.42" fill="#000" stroke="#00ff00" stroke-width="0.88"/>
<rect x="860.99" y="70.24" width="1.77" height="24.82" fill="#000" stroke="#00ff00" stroke-width="0.88"/>
<rect x="864.52" y="69.74" width="1.77" height="2.22" fill="#fff" stroke="#00ff00" stroke-width="0.88"/>
<rect x="868.05" y="72.24" width="1.77" height="35.72" fill="#fff" stroke="#00ff00" stroke-width="0.88"/>
<rect x="871.58" y="108.84" width="1.77" height="6.32" fill="#fff" stroke="#00ff00" stroke-width="0.88"/>
<rect x="875.11" y="115.54" width="1.77" height="11.42" fill="#fff" stroke="#00ff00" stroke-width="0.88"/>
<rect x="878.64" y="125.74" width="1.77" height="6.82" fill="#fff" stroke="#00ff00" stroke-width="0.88"/>
<rect x="882.18" y="123.24" width="1.77" height="6.72" fill="#fff" stroke="#00ff00" stroke-width="0.88"/>
<rect x="885.71" y="130.84" width="1.77" height="43.92" fill="#fff" stroke="#00ff00" stroke-width="0.88"/>
<rect x="889.24" y="175.54" width="1.77" height="18.22" fill="#fff" stroke="#00ff00" stroke-width="0.88"/>
<rect x="892.77" y="194.14" width="1.77" height="5.32" fill="#fff" stroke="#00ff00" stroke-width="0.88"/>
<rect x="896.3" y="191.54" width="1.77" height="7.92" fill="#000" stroke="#00ff00" stroke-width="0.88"/>
<rect x="899.83" y="191.54" width="1.77" height="23.82" fill="#fff" stroke="#00ff00" stroke-width="0.88"/>
<rect x="903.36" y="201.84" width="1.77" height="11.52" fill="#000" stroke="#00ff00" stroke-width="0.88"/>
<rect x="906.89" y="193.14" width="1.77" height="9.42" fill="#000" stroke="#00ff00" stroke-width="0.88"/>
<rect x="910.42" y="189.54" width="1.77" height="2.72" fill="#000" stroke="#00ff00" stroke-width="0.88"/>
<rect x="913.95" y="188.44" width="1.77" height="1.72" fill="#000" stroke="#00ff00" stroke-width="0.88"/>
<rect x="917.48" y="188.94" width="1.77" height="41.12" fill="#fff" stroke="#00ff00" stroke-width="0.88"/>
<rect x="921.01" y="230.64" width="1.77" height="10.42" fill="#fff" stroke="#00ff00" stroke-width="0.88"/>
<rect x="924.54" y="237.84" width="1.77" height="12.52" fill="#fff" stroke="#00ff00" stroke-width="0.88"/>
<rect x="928.07" y="250.64" width="1.77" height="15.62" fill="#fff" stroke="#00ff00" stroke-width="0.88"/>
<rect x="931.6" y="262.04" width="1.77" height="4.22" fill="#000" stroke="#00ff00" stroke-width="0.88"/>
<rect x="935.13" y="262.04" width="1.77" height="4.72" fill="#fff" stroke="#00ff00" stroke-width="0.88"/>
<rect x="938.67" y="267.54" width="1.77" height="8.92" fill="#fff" stroke="#00ff00" stroke-width="0.88"/>
<rect x="942.2" y="277.14" width="1.77" height="3.42" fill="#fff" stroke="#00ff00" stroke-width="0.88"/>
<rect x="945.73" y="277.34" width="1.77" height="3.02" fill="#000" stroke="#00ff00" stroke-width="0.88"/>
<rect x="949.26" y="269.84" width="1.77" height="7.12" fill="#000" stroke="#00ff00" stroke-width="0.88"/>
<rect x="952.79" y="240.84" width="1.77" height="28.42" fill="#000" stroke="#00ff00" stroke-width="0.88"/>
<rect x="956.32" y="240.84" width="1.77" height="13.52" fill="#fff" stroke="#00ff00" stroke-width="0.88"/>
<rect x="959.85" y="230.14" width="1.77" height="24.32" fill="#000" stroke="#00ff00" stroke-width="0.88"/>
<rect x="963.38" y="222.94" width="1.77" height="7.62" fill="#000" stroke="#00ff00" stroke-width="0.88"/>
<rect x="966.91" y="229.14" width="1.77" height="10.32" fill="#000" stroke="#00ff00" stroke-width="0.88"/>
<rect x="970.44" y="219.54" width="1.77" height="10.02" fill="#000" stroke="#00ff00" stroke-width="0.88"/>
<rect x="973.97" y="193.84" width="1.77" height="25.42" fill="#000" stroke="#00ff00" stroke-width="0.88"/>
<rect x="977.5" y="170.14" width="1.77" height="23.32" fill="#000" stroke="#00ff00" stroke-width="0.88"/>
<rect x="981.03" y="171.14" width="1.77" height="14.42" fill="#fff" stroke="#00ff00" stroke-width="0.88"/>
<rect x="984.56" y="183.44" width="1.77" height="9.52" fill="#fff" stroke="#00ff00" stroke-width="0.88"/>
<rect x="988.09" y="189.64" width="1.77" height="5.42" fill="#000" stroke="#00ff00" stroke-width="0.88"/>
<rect x="991.62" y="183.44" width="1.77" height="4.82" fill="#000" stroke="#00ff00" stroke-width="0.88"/>
<rect x="995.15" y="184.04" width="1.77" height="3.72" fill="#fff" stroke="#00ff00" stroke-width="0.88"/>
<rect x="998.69" y="180.94" width="1.77" height="7.32" fill="#000" stroke="#00ff00" stroke-width="0.88"/>
<rect x="1002.22" y="161.34" width="1.77" height="18.72" fill="#000" stroke="#00ff00" stroke-width="0.88"/>
<rect x="1005.75" y="161.34" width="1.77" height="23.32" fill="#fff" stroke="#00ff00" stroke-width="0.88"/>
<rect x="1009.28" y="181.94" width="1.77" height="7.32" fill="#000" stroke="#00ff00" stroke-width="0.88"/>
<rect x="1012.81" y="165.44" width="1.77" height="15.62" fill="#000" stroke="#00ff00" stroke-width="0.88"/>
<rect x="1016.34" y="166.44" width="1.77" height="13.12" fill="#fff" stroke="#00ff00" stroke-width="0.88"/>
<rect x="1019.87" y="171.14" width="1.77" height="8.42" fill="#000" stroke="#00ff00" stroke-width="0.88"/>
<rect x="1023.4" y="171.64" width="1.77" height="5.82" fill="#fff" stroke="#00ff00" stroke-width="0.88"/>
<rect x="1026.93" y="171.14" width="1.77" height="6.32" fill="#000" stroke="#00ff00" stroke-width="0.88"/>
<rect x="1030.46" y="170.64" width="1.77" height="1.62" fill="#fff" stroke="#00ff00" stroke-width="0.88"/>
<rect x="1033.99" y="144.34" width="1.77" height="27.92" fill="#000" stroke="#00ff00" stroke-width="0.88"/>
<rect x="1037.52" y="143.84" width="1.77" height="17.12" fill="#fff" stroke="#00ff00" stroke-width="0.88"/>
<rect x="1041.05" y="161.34" width="1.77" height="1.22" fill="#fff" stroke="#00ff00" stroke-width="0.88"/>
<rect x="1044.58" y="161.34" width="1.77" height="34.22" fill="#fff" stroke="#00ff00" stroke-width="0.88"/>
<rect x="1048.11" y="192.84" width="1.77" height="2.22" fill="#fff" stroke="#00ff00" stroke-width="0.88"/>
<rect x="1051.64" y="175.24" width="1.77" height="7.32" fill="#000" stroke="#00ff00" stroke-width="0.88"/>
<rect x="1055.17" y="150.54" width="1.77" height="25.92" fill="#000" stroke="#00ff00" stroke-width="0.88"/>
<rect x="1058.71" y="150.04" width="1.77" height="9.42" fill="#fff" stroke="#00ff00" stroke-width="0.88"/>
<rect x="1062.24" y="159.84" width="1.77" height="2.72" fill="#fff" stroke="#00ff00" stroke-width="0.88"/>
<rect x="1065.77" y="162.84" width="1.77" height="6.42" fill="#fff" stroke="#00ff00" stroke-width="0.88"/>
<rect x="1069.3" y="171.14" width="1.77" height="7.32" fill="#fff" stroke="#00ff00" stroke-width="0.88"/>
<rect x="1076.36" y="153.64" width="1.77" height="30.02" fill="#000" stroke="#00ff00" stroke-width="0.88"/>
<rect x="1079.89" y="153.64" width="1.77" height="7.82" fill="#fff" stroke="#00ff00" stroke-width="0.88"/>
<rect x="1083.42" y="159.24" width="1.77" height="3.32" fill="#000" stroke="#00ff00" stroke-width="0.88"/>
<rect x="1086.95" y="146.44" width="1.77" height="11.52" fill="#000" stroke="#00ff00" stroke-width="0.88"/>
<rect x="1090.48" y="146.04" width="1.77" height="1.72" fill="#fff" stroke="#00ff00" stroke-width="0.88"/>
<rect x="1094.01" y="162.54" width="1.77" height="2.72" fill="#000" stroke="#00ff00" stroke-width="0.88"/>
<rect x="1097.54" y="155.34" width="1.77" height="6.82" fill="#000" stroke="#00ff00" stroke-width="0.88"/>
<rect x="1104.6" y="154.24" width="1.77" height="1.72" fill="#fff" stroke="#00ff00" stroke-width="0.88"/>
</g>
<path d="M10.55 203V265.5" stroke="#6cf06c" stroke-width="0.7" fill="none"/>
<path d="M11.2 239V243.5" stroke="#ffffff" stroke-width="1.5" fill="none"/>
<path d="M10.3 450.2H1110" stroke="#e4e4e4" stroke-width="1" stroke-dasharray="15.89 5.295" fill="none"/>
<path d="M10.3 596H1110" stroke="#c2c2c2" stroke-width="1.3" stroke-dasharray="15.5 5.685" fill="none"/>
<path d="M10.3 596H1116" stroke="#566676" stroke-width="1.3" stroke-dasharray="0 17 1.9 2.285" fill="none"/>
<polyline points="11,465.2 14.53,466.8 18.06,466.8 21.59,468.1 25.12,470.4 28.65,468.4 32.18,472.2 35.71,472.4 39.24,474.1 42.78,474.1 46.31,480.5 49.84,487 53.37,485.6 56.9,485.6 60.43,487 63.96,477.6 67.49,480.7 71.02,482.5 74.55,478.9 78.08,475.3 81.61,477.6 85.14,474.8 88.67,472.2 92.2,463 95.73,454.4 99.27,456.3 102.8,454.4 106.33,459.9 109.86,457.3 113.39,461.9 116.92,467.6 120.45,477.4 123.98,470.2 127.51,475.3 131.04,467.4 134.57,468.8 138.1,462.3 141.63,464.1 145.16,470.3 148.69,468.3 152.22,473.9 155.75,472.6 159.29,471 162.82,467.5 166.35,467.5 169.88,471.9 173.41,476.5 176.94,472.9 180.47,470.8 184,466.7 187.53,469.8 191.06,465.2 194.59,458 198.12,461.6 201.65,446.6 205.18,458 208.71,466.2 212.24,472.4 215.77,454.4 219.31,468.8 222.84,447.7 226.37,453.3 229.9,450.8 233.43,458 236.96,433.8 240.49,444.6 244.02,444.1 247.55,474.4 251.08,480.1 254.61,478 258.14,460 261.67,455.4 265.2,460 268.73,460 272.26,455.4 275.8,463.6 279.33,447.1 282.86,454.4 286.39,452.3 289.92,476.5 293.45,467.2 296.98,467.4 300.51,471.7 304.04,465.7 307.57,451.3 311.1,452.3 314.63,452.8 318.16,460.5 321.69,462.3 325.22,452.3 328.75,449.4 332.28,459 335.82,455.7 339.35,452.6 342.88,438.4 346.41,436.1 349.94,441.5 353.47,470.3 357,461.1 360.53,458.5 364.06,457.4 367.59,458.5 371.12,474.5 374.65,479.7 378.18,485.3 381.71,491.5 385.24,499.2 388.77,497.7 392.3,490.5 395.84,507.4 399.37,508.4 402.9,503.2 406.43,513.5 409.96,514.4 413.49,512.5 417.02,519.7 420.55,526.4 424.08,522.6 427.61,534.7 431.14,533.3 434.67,539.5 438.2,539.5 441.73,533.3 445.26,543.4 448.79,554.2 452.33,556.3 455.86,545.7 459.39,548 462.92,539.8 466.45,541.9 469.98,549.6 473.51,547.2 477.04,545.4 480.57,548.3 484.1,550 487.63,550.3 491.16,553.3 494.69,553.3 498.22,552.6 501.75,559.2 505.28,563.6 508.81,568.8 512.35,580 515.88,586.9 519.41,605.5 522.94,591.6 526.47,600.3 530,590.5 533.53,591.6 537.06,593.9 540.59,583.8 544.12,577.1 547.65,568.4 551.18,591.6 554.71,603.9 558.24,609.1 561.77,606 565.3,594.7 568.83,605.5 572.37,610.1 575.9,589.5 579.43,596.2 582.96,588 586.49,579.7 590.02,571 593.55,569.2 597.08,568.4 600.61,568.2 604.14,558.1 607.67,557.9 611.2,559.7 614.73,554.7 618.26,549.6 621.79,546.2 625.32,545 628.86,538.5 632.39,540.3 635.92,539.5 639.45,542.4 642.98,535.5 646.51,536.7 650.04,532.3 653.57,532.3 657.1,539.5 660.63,533.1 664.16,528.5 667.69,526.4 671.22,524.9 674.75,522 678.28,519.7 681.81,513.5 685.34,510.2 688.88,514.6 692.41,515.4 695.94,516.6 699.47,512.7 703,510.7 706.53,509.4 710.06,509.4 713.59,505.6 717.12,505.6 720.65,504.6 724.18,496.5 727.71,494.5 731.24,498.4 734.77,495.8 738.3,495 741.83,496.4 745.36,498.4 748.9,488.6 752.43,486.3 755.96,488.6 759.49,493.3 763.02,498.4 766.55,505.8 770.08,495.8 773.61,488.1 777.14,489.9 780.67,485.5 784.2,486.6 787.73,478.3 791.26,473.9 794.79,477.6 798.32,464.4 801.85,459.6 805.38,460.8 808.92,465.5 812.45,464.4 815.98,474.2 819.51,471.6 823.04,463.9 826.57,462.2 830.1,456 833.63,462.6 837.16,460.3 840.69,458 844.22,463.4 847.75,460.8 851.28,459.7 854.81,458.5 858.34,452 861.87,458.2 865.41,445.8 868.94,446.8 872.47,462.3 876,464.9 879.53,470.5 883.06,478.1 886.59,476.2 890.12,496.3 893.65,503.5 897.18,505.6 900.71,502.3 904.24,512.6 907.77,507.1 911.3,503.3 914.83,502.3 918.36,501.3 921.89,518.8 925.43,523.1 928.96,527.7 932.49,534.4 936.02,532.2 939.55,535 943.08,538.6 946.61,540.4 950.14,538 953.67,535.5 957.2,523.3 960.73,529.8 964.26,519.5 967.79,516.4 971.32,519.3 974.85,513.6 978.38,502.6 981.92,493.5 985.45,500.2 988.98,503 992.51,501 996.04,499.4 999.57,501.3 1003.1,498.9 1006.63,490.2 1010.16,504.9 1013.69,503 1017.22,496.1 1020.75,502.6 1024.28,498.7 1027.81,501.6 1031.34,508.2 1034.87,509.5 1038.4,493.5 1041.94,502.4 1045.47,503 1049,522.4 1052.53,527.1 1056.06,515 1059.59,501.7 1063.12,505.9 1066.65,508.5 1070.18,514.1 1073.71,521.1 1077.24,524.4 1080.77,505 1084.3,510.1 1087.83,506.6 1091.36,500.2 1094.89,501.8 1098.42,510.2 1101.96,505.7 1105.49,504.4 1109.02,505.7" stroke="#de00de" stroke-width="1.05" fill="none" stroke-linejoin="round"/>
<path d="M1116.7 40.2h2.7M1116.7 69.35h2.7M1116.7 98.5h2.7M1116.7 127.65h2.7M1116.7 156.8h2.7M1116.7 185.95h2.7M1116.7 215.1h2.7M1116.7 244.25h2.7M1116.7 273.4h2.7M1116.7 302.55h2.7M1116.7 331.7h2.7M1116.7 360.85h2.7M1116.7 390h2.7M1116.7 419.15h2.7M1116.7 596h2.7" stroke="#e0e0e0" stroke-width="0.9" fill="none"/>
<path d="M10.45 618.9v3M67.55 618.9v3M124.03 618.9v3M180.52 618.9v3M237.01 618.9v3M293.5 618.9v3M350 618.9v3M406.49 618.9v3M462.98 618.9v3M519.47 618.9v3M575.95 618.9v3M632.44 618.9v3M688.93 618.9v3M745.42 618.9v3M801.91 618.9v3M858.4 618.9v3M914.89 618.9v3M971.38 618.9v3M1027.88 618.9v3M1084.37 618.9v3" stroke="#e0e0e0" stroke-width="0.9" fill="none"/>
<path d="M12.9 36.2h6.8L16.3 40.3z" fill="#fff"/>
<rect x="1117.7" y="152.8" width="36.9" height="9.9" fill="#fff"/>
</svg>
<div id="title">AUDNZD,H4</div>
<div class="t" style="left:24.6px;top:32.6px"><span class="L">AUDNZD,H4</span> <span class="N" style="margin-left:1.4px">1.07529 1.07596 1.07481 1.07518</span></div>
<div class="t" style="left:13.9px;top:426.4px"><span class="L" style="letter-spacing:-0.36px">H_L_VALUE_1Month</span> 0.6124 1.0000 0.0000</div>
<div class="t pl" style="top:35.4px">1.08500</div>
<div class="t pl" style="top:64.55px">1.08255</div>
<div class="t pl" style="top:93.7px">1.08010</div>
<div class="t pl" style="top:122.85px">1.07770</div>
<div class="t pl" style="top:181.15px">1.07285</div>
<div class="t pl" style="top:210.3px">1.07040</div>
<div class="t pl" style="top:239.45px">1.06795</div>
<div class="t pl" style="top:268.6px">1.06555</div>
<div class="t pl" style="top:297.75px">1.06310</div>
<div class="t pl" style="top:326.9px">1.06065</div>
<div class="t pl" style="top:356.05px">1.05820</div>
<div class="t pl" style="top:385.2px">1.05580</div>
<div class="t pl" style="top:414.35px">1.05335</div>
<div class="t pl" style="top:152.8px;color:#000">1.07518</div>
<div class="t" style="left:1120.7px;top:425.4px">1.1757</div>
<div class="t" style="left:1120.2px;top:591.4px">0.00</div>
<div class="t" style="left:1120.1px;top:608px">-0.1539</div>
<div class="t tm" style="left:9.35px;top:622.2px">24 Dec 2020</div>
<div class="t tm" style="left:66.45px;top:622.2px">30 Dec 12:00</div>
<div class="t tm" style="left:122.94px;top:622.2px">5 Jan 04:00</div>
<div class="t tm" style="left:179.42px;top:622.2px">7 Jan 20:00</div>
<div class="t tm" style="left:235.91px;top:622.2px">12 Jan 12:00</div>
<div class="t tm" style="left:292.4px;top:622.2px">15 Jan 04:00</div>
<div class="t tm" style="left:348.89px;top:622.2px">19 Jan 20:00</div>
<div class="t tm" style="left:405.38px;top:622.2px">22 Jan 12:00</div>
<div class="t tm" style="left:461.88px;top:622.2px">27 Jan 04:00</div>
<div class="t tm" style="left:518.37px;top:622.2px">29 Jan 20:00</div>
<div class="t tm" style="left:574.85px;top:622.2px">3 Feb 12:00</div>
<div class="t tm" style="left:631.34px;top:622.2px">8 Feb 04:00</div>
<div class="t tm" style="left:687.83px;top:622.2px">10 Feb 20:00</div>
<div class="t tm" style="left:744.32px;top:622.2px">15 Feb 12:00</div>
<div class="t tm" style="left:800.81px;top:622.2px">18 Feb 04:00</div>
<div class="t tm" style="left:857.3px;top:622.2px">22 Feb 20:00</div>
<div class="t tm" style="left:913.79px;top:622.2px">25 Feb 12:00</div>
<div class="t tm" style="left:970.28px;top:622.2px">2 Mar 04:00</div>
<div class="t tm" style="left:1026.78px;top:622.2px">4 Mar 20:00</div>
<div class="t tm" style="left:1083.27px;top:622.2px">9 Mar 12:00</div>
</body></html>
